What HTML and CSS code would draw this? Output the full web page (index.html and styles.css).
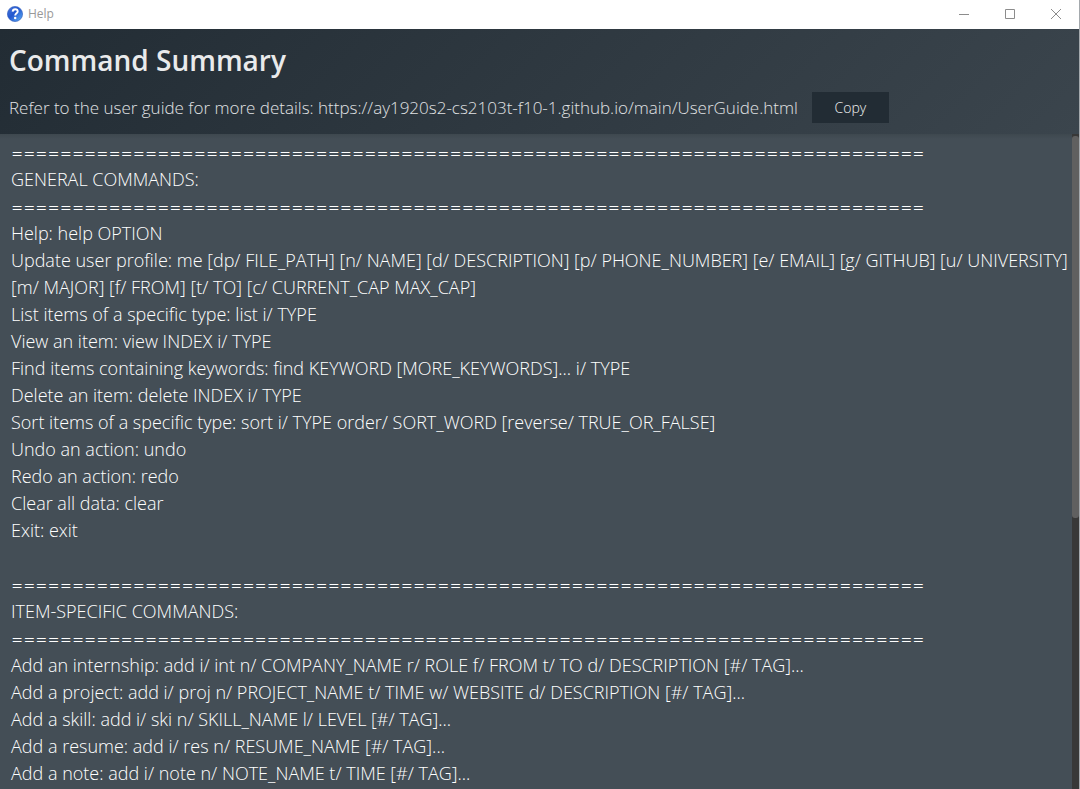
FILE: index.html
```html
<!DOCTYPE html>
<html lang="en">
<head>
<meta charset="utf-8">
<title>Help</title>
<link rel="stylesheet" href="styles.css">
</head>
<body>
<div class="window">
  <header class="titlebar">
    <svg class="app-icon" viewBox="0 0 16 16" aria-hidden="true">
      <defs>
        <linearGradient id="ball" x1="0" y1="0" x2="1" y2="1">
          <stop offset="0" stop-color="#4a78dc"/>
          <stop offset="0.45" stop-color="#2257cf"/>
          <stop offset="1" stop-color="#62b4f8"/>
        </linearGradient>
      </defs>
      <circle cx="8" cy="8" r="7.6" fill="url(#ball)" stroke="#2c57b8" stroke-width="0.6"/>
      <path d="M5.6 5.6C5.8 3.9 6.9 3.2 8.2 3.2C9.7 3.2 10.7 4.1 10.7 5.4C10.7 7.3 8.2 7.3 8.2 9.5" fill="none" stroke="#fff" stroke-width="1.9"/>
      <circle cx="8.2" cy="12" r="1.25" fill="#fff"/>
    </svg>
    <span class="title">Help</span>
    <button class="win-btn" type="button" aria-label="Minimize"><svg viewBox="0 0 10 10"><path d="M0 5.5H10"/></svg></button>
    <button class="win-btn" type="button" aria-label="Maximize"><svg viewBox="0 0 10 10"><path d="M.5 .5H9.5V9.5H.5Z"/></svg></button>
    <button class="win-btn" type="button" aria-label="Close"><svg viewBox="0 0 10 10"><path d="M0 0L10 10M10 0L0 10"/></svg></button>
  </header>
  <section class="intro">
    <h1 class="heading">Command Summary</h1>
    <div class="guide">
      <span>Refer to the user guide for more details: https://ay1920s2-cs2103t-f10-1.github.io/main/UserGuide.html</span>
      <button class="copy" type="button">Copy</button>
    </div>
  </section>
  <main class="panel">
    <div class="commands">
      <p class="rule">===========================================================================</p>
      <p>GENERAL COMMANDS:</p>
      <p class="rule">===========================================================================</p>
      <p>Help: help OPTION</p>
      <p>Update user profile: me [dp/ FILE_PATH] [n/ NAME] [d/ DESCRIPTION] [p/ PHONE_NUMBER] [e/ EMAIL] [g/ GITHUB] [u/ UNIVERSITY] [m/ MAJOR] [f/ FROM] [t/ TO] [c/ CURRENT_CAP MAX_CAP]</p>
      <p>List items of a specific type: list i/ TYPE</p>
      <p>View an item: view INDEX i/ TYPE</p>
      <p>Find items containing keywords: find KEYWORD [MORE_KEYWORDS]... i/ TYPE</p>
      <p>Delete an item: delete INDEX i/ TYPE</p>
      <p>Sort items of a specific type: sort i/ TYPE order/ SORT_WORD [reverse/ TRUE_OR_FALSE]</p>
      <p>Undo an action: undo</p>
      <p>Redo an action: redo</p>
      <p>Clear all data: clear</p>
      <p>Exit: exit</p>
      <p class="rule section">===========================================================================</p>
      <p>ITEM-SPECIFIC COMMANDS:</p>
      <p class="rule">===========================================================================</p>
      <p>Add an internship: add i/ int n/ COMPANY_NAME r/ ROLE f/ FROM t/ TO d/ DESCRIPTION [#/ TAG]...</p>
      <p>Add a project: add i/ proj n/ PROJECT_NAME t/ TIME w/ WEBSITE d/ DESCRIPTION [#/ TAG]...</p>
      <p>Add a skill: add i/ ski n/ SKILL_NAME l/ LEVEL [#/ TAG]...</p>
      <p>Add a resume: add i/ res n/ RESUME_NAME [#/ TAG]...</p>
      <p>Add a note: add i/ note n/ NOTE_NAME t/ TIME [#/ TAG]...</p>
    </div>
    <div class="scroll-track"><div class="scroll-thumb"></div></div>
  </main>
</div>
</body>
</html>
```
FILE: styles.css
```css
* { box-sizing: border-box; }

body {
  margin: 0;
  font-family: "Open Sans", "Noto Sans", sans-serif;
}

.window {
  display: flex;
  flex-direction: column;
  height: 100vh;
  overflow: hidden;
  border-right: 1px solid #a4a9ad;
  background: #444e56;
}

.titlebar {
  display: flex;
  align-items: center;
  flex: none;
  height: 29px;
  padding: 0 0 2px 7px;
  background: #fff;
}

.app-icon { width: 16px; height: 16px; }

.title {
  flex: 1;
  padding-left: 5px;
  font-size: 12px;
  color: #999;
}

.win-btn {
  display: grid;
  place-items: center;
  width: 46px;
  height: 27px;
  padding: 0;
  border: 0;
  background: none;
}

.win-btn svg {
  width: 10px;
  height: 10px;
  fill: none;
  stroke: #8c8c8c;
  overflow: visible;
}

.intro {
  flex: none;
  padding: 11px 9px;
  background: linear-gradient(135deg, #222c34, #3b454d);
}

.heading {
  margin: 0;
  font-size: 28px;
  line-height: 40px;
  font-weight: 600;
  color: #e9eaeb;
}

.guide {
  display: flex;
  align-items: center;
  gap: 14px;
  margin-top: 12px;
  font-size: 17px;
  font-weight: 300;
  color: #e0e2e4;
  white-space: nowrap;
}

.copy {
  width: 77px;
  height: 31px;
  padding: 0;
  border: 0;
  background: #222c34;
  color: #f2f2f2;
  font: 300 14px "Open Sans", "Noto Sans", sans-serif;
}

.panel {
  display: flex;
  flex: 1;
  min-height: 0;
  background: linear-gradient(#3e484f, #444e56 5px);
}

.commands {
  flex: 1;
  min-width: 0;
  padding: 5px 0 0 11px;
  overflow: hidden;
  font-size: 18px;
  line-height: 27px;
  font-weight: 300;
  color: #fff;
}

.commands p { margin: 0; }

.commands .rule {
  font-family: Lato, sans-serif;
  font-size: 21px;
  white-space: nowrap;
}

.commands .section { margin-top: 27px; }

.scroll-track {
  width: 7px;
  padding-top: 2px;
  background: #383838;
}

.scroll-thumb {
  height: 58.5%;
  border-radius: 3px;
  background: #606060;
}
```
